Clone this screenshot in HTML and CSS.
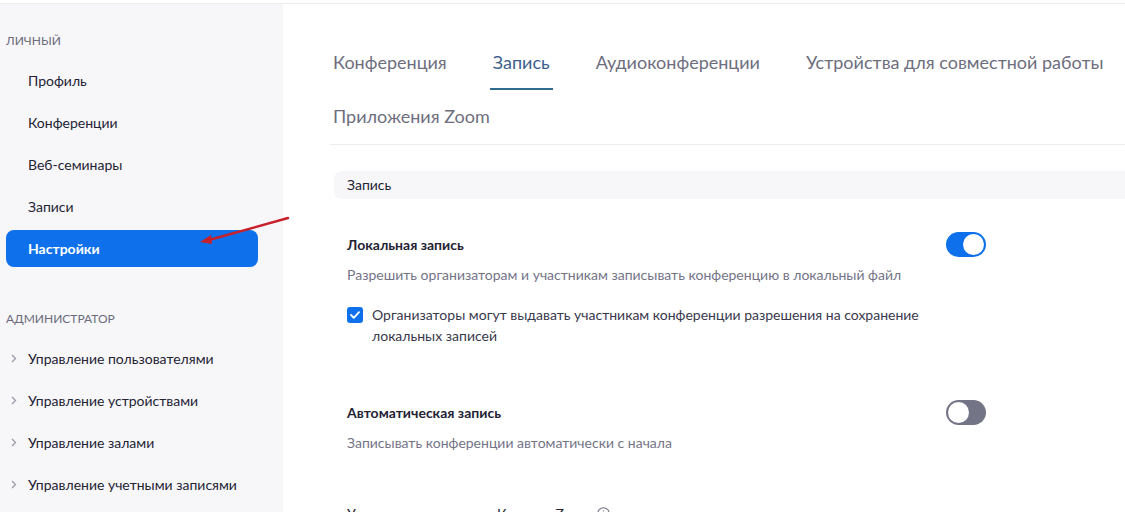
FILE: index.html
```html
<!DOCTYPE html>
<html lang="ru">
<head>
  <meta charset="UTF-8">
  <title>Настройки — Запись</title>
  <link rel="stylesheet" href="styles.css">
</head>
<body>

  <div class="topline"></div>

  <div class="layout">
    <div class="sidebar">
      <div class="nav-heading">Личный</div>
      <a href="#" class="nav-item">Профиль</a>
      <a href="#" class="nav-item">Конференции</a>
      <a href="#" class="nav-item">Веб-семинары</a>
      <a href="#" class="nav-item">Записи</a>
      <a href="#" class="nav-item active">Настройки</a>

      <div class="nav-heading admin">Администратор</div>
      <a href="#" class="nav-item sub"><svg class="chev" width="6" height="9" viewBox="0 0 6 9"><path d="M1 1l3.5 3.5L1 8" fill="none" stroke="#9a9aa8" stroke-width="1.3"/></svg>Управление пользователями</a>
      <a href="#" class="nav-item sub"><svg class="chev" width="6" height="9" viewBox="0 0 6 9"><path d="M1 1l3.5 3.5L1 8" fill="none" stroke="#9a9aa8" stroke-width="1.3"/></svg>Управление устройствами</a>
      <a href="#" class="nav-item sub"><svg class="chev" width="6" height="9" viewBox="0 0 6 9"><path d="M1 1l3.5 3.5L1 8" fill="none" stroke="#9a9aa8" stroke-width="1.3"/></svg>Управление залами</a>
      <a href="#" class="nav-item sub"><svg class="chev" width="6" height="9" viewBox="0 0 6 9"><path d="M1 1l3.5 3.5L1 8" fill="none" stroke="#9a9aa8" stroke-width="1.3"/></svg>Управление учетными записями</a>
    </div>

    <div class="main">
      <div class="tabs">
        <a href="#" class="tab">Конференция</a>
        <a href="#" class="tab active">Запись</a>
        <a href="#" class="tab">Аудиоконференции</a>
        <a href="#" class="tab">Устройства для совместной работы</a>
        <a href="#" class="tab">Приложения Zoom</a>
      </div>

      <div class="section-title">Запись</div>

      <div class="settings">
        <div class="setting">
          <div class="setting-head">
            <span class="setting-name">Локальная запись</span>
            <span class="toggle on"></span>
          </div>
          <p class="setting-desc">Разрешить организаторам и участникам записывать конференцию в локальный файл</p>
          <label class="check">
            <span class="box"><svg width="10" height="8" viewBox="0 0 10 8"><path d="M1 4l2.8 2.8L9 1.2" fill="none" stroke="#fff" stroke-width="1.8" stroke-linecap="round" stroke-linejoin="round"/></svg></span>
            <span class="check-text">Организаторы могут выдавать участникам конференции разрешения на сохранение локальных записей</span>
          </label>
        </div>

        <div class="setting">
          <div class="setting-head">
            <span class="setting-name">Автоматическая запись</span>
            <span class="toggle"></span>
          </div>
          <p class="setting-desc">Записывать конференции автоматически с начала</p>
        </div>

        <div class="setting">
          <div class="setting-head">
            <span class="setting-name light">Уведомление о записи Клиента Zoom <svg width="13" height="13" viewBox="0 0 13 13"><circle cx="6.5" cy="6.5" r="5.7" fill="none" stroke="#747487" stroke-width="1.1"/><path d="M6.5 5.8v3.6M6.5 3.6v.9" stroke="#747487" stroke-width="1.2"/></svg></span>
          </div>
        </div>
      </div>
    </div>
  </div>

  <!-- стрелка поверх меню -->
  <svg class="arrow" width="100" height="40" viewBox="0 0 100 40">
    <path d="M93 6 L14 28" stroke="#c8202a" stroke-width="2.4" stroke-linecap="round"/>
    <path d="M5 30 L16 23 L17 32 Z" fill="#c8202a"/>
  </svg>

</body>
</html>
```

FILE: styles.css
```css
* { box-sizing: border-box; margin: 0; padding: 0; }
body { font-family: Lato, "Open Sans", sans-serif; background: #fff; color: #232333; overflow: hidden; height: 512px; }
a { text-decoration: none; }

.topline { height: 4px; border-bottom: 1px solid #ececf0; }

.layout { display: flex; height: 508px; }

/* Sidebar */
.sidebar { width: 283px; flex-shrink: 0; background: #f7f7fa; padding-top: 27px; }
.nav-heading {
  height: 20px; line-height: 20px; padding-left: 6px; font-size: 12px;
  text-transform: uppercase; color: #6b6b7b; margin-bottom: 11px;
}
.nav-heading.admin { margin-top: 42px; margin-bottom: 11px; }
.nav-item {
  display: flex; align-items: center; height: 37px; margin: 0 25px 5px 6px;
  padding-left: 22px; font-size: 14px; color: #232333; border-radius: 8px;
}
.nav-item.active { background: #0e71eb; color: #fff; font-weight: bold; }
.nav-item.sub { padding-left: 5px; }
.chev { margin-right: 11px; }

/* Main */
.main { flex: 1; padding: 36px 0 0 47px; }

.tabs {
  display: flex; flex-wrap: wrap; column-gap: 40px; row-gap: 4px;
  border-bottom: 1px solid #ededf1;
}
.tab {
  padding: 10px 3px 14px; line-height: 24px; font-size: 18px; color: #6e6e7e;
  border-bottom: 2px solid transparent;
}
.tab.active { color: #3c5f8e; border-bottom-color: #2f6b8e; }

.section-title {
  margin: 26px 0 0 4px; height: 28px; line-height: 28px; padding-left: 13px;
  background: #f7f7fa; border-radius: 8px 0 0 8px; font-size: 14px; color: #232333;
}

.settings { padding: 0 139px 0 17px; }
.setting { margin-top: 35px; }
.setting + .setting { margin-top: 56px; }
.setting:last-child { margin-top: 50px; }

.setting-head { display: flex; align-items: center; justify-content: space-between; height: 20px; }
.setting-name { font-size: 14px; font-weight: bold; color: #232333; display: flex; align-items: center; gap: 6px; }
.setting-name.light { font-weight: normal; }

.setting-desc { margin-top: 11px; line-height: 20px; font-size: 14px; color: #747487; }

.toggle {
  width: 40px; height: 25px; border-radius: 13px; background: #747487; position: relative;
}
.toggle::after {
  content: ""; position: absolute; top: 2px; left: 2px; width: 21px; height: 21px;
  border-radius: 50%; background: #fff;
}
.toggle.on { background: #0e71eb; }
.toggle.on::after { left: 17px; }

.check { display: flex; align-items: flex-start; gap: 9px; margin-top: 19px; }
.box {
  width: 16px; height: 16px; flex-shrink: 0; margin-top: 3px; border-radius: 3px;
  background: #0e71eb; display: flex; align-items: center; justify-content: center;
}
.check-text { max-width: 560px; font-size: 14px; line-height: 21px; color: #39394d; }

/* Overlay arrow */
.arrow { position: absolute; left: 195px; top: 212px; }
```
